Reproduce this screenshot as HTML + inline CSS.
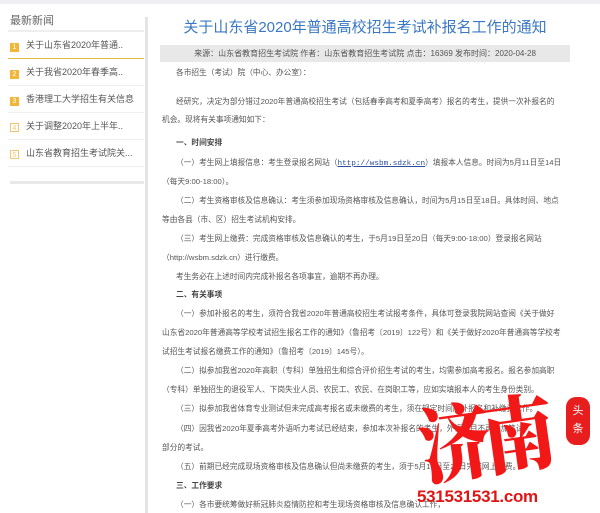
<!DOCTYPE html><html><head><meta charset="utf-8"><style>
*{margin:0;padding:0;box-sizing:border-box}
body{width:600px;height:513px;overflow:hidden;background:#fff;font-family:"Liberation Sans","Noto Sans CJK SC",sans-serif;position:relative;color:#555}
.top{position:absolute;left:0;top:0;width:600px;height:4px;background:#eef0f3}
.side{position:absolute;left:8px;top:10px;width:136px}
.side h3{font-size:11px;font-weight:normal;color:#666;height:22px;line-height:22px;padding-left:2px;border-bottom:2px solid #eee}
.side .it{height:27px;line-height:27px;font-size:9px;color:#555;border-bottom:1px solid #eee;padding-left:2px;white-space:nowrap;overflow:hidden}
.side .it.a{border-bottom:1px solid #e9b84a}
.n{display:inline-block;width:9px;height:9px;font-size:7px;line-height:9px;text-align:center;margin-right:7px;vertical-align:-1px;background:#f0b73a;color:#fff}
.n.o{background:#fff;border:1px solid #f0c870;color:#f0c870}
.sb{position:absolute;left:10px;top:181px;width:134px;height:3px;background:#e8e8e8}
.vbar{position:absolute;left:145px;top:17px;width:3px;height:496px;background:#e4e4e4}
.title{position:absolute;left:160px;top:16px;width:410px;text-align:center;font-size:15px;color:#3b78c4}
.meta{position:absolute;left:160px;top:45px;width:410px;height:17px;background:#e8e8e8;font-size:8px;line-height:17px;text-align:center;color:#555}
.l{position:absolute;font-size:7.7px;color:#555;white-space:nowrap;left:162px}
.i{left:176px}
.b{font-weight:bold;color:#444}
a{color:#2a4fa0;text-decoration:underline;font-family:"Liberation Mono",monospace}
.wm{position:absolute;left:418px;top:398px;line-height:1;font-family:"Noto Serif CJK SC",serif;font-weight:900;font-size:72px;color:#f21818;transform:rotate(-8deg) scaleY(1.15);letter-spacing:-8px}
.url{position:absolute;left:417px;top:487px;font-family:"Liberation Sans",sans-serif;font-weight:bold;font-size:17px;color:#e01515;letter-spacing:-.3px}
.tt{position:absolute;left:566px;top:397px;width:24px;height:48px;background:#e81e1e;border-radius:10px;color:#fff;font-size:11px;text-align:center;line-height:18px;padding-top:5px}
</style></head><body>
<div class="top"></div>
<div class="side"><h3>最新新闻</h3>
<div class="it a"><span class="n">1</span>关于山东省2020年普通..</div>
<div class="it"><span class="n">2</span>关于我省2020年春季高..</div>
<div class="it"><span class="n">3</span>香港理工大学招生有关信息</div>
<div class="it"><span class="n o">4</span>关于调整2020年上半年..</div>
<div class="it"><span class="n o">5</span>山东省教育招生考试院关...</div>
</div>
<div class="sb"></div>
<div class="vbar"></div>
<div class="title">关于山东省2020年普通高校招生考试补报名工作的通知</div>
<div class="meta">来源：山东省教育招生考试院 作者：山东省教育招生考试院 点击：16369 发布时间：2020-04-28</div>
<div class="l i" style="top:67px">各市招生（考试）院（中心、办公室）：</div>
<div class="l i" style="top:96px">经研究，决定为部分错过2020年普通高校招生考试（包括春季高考和夏季高考）报名的考生，提供一次补报名的</div>
<div class="l" style="top:114px">机会。现将有关事项通知如下：</div>
<div class="l i b" style="top:137px">一、时间安排</div>
<div class="l i" style="top:157px">（一）考生网上填报信息：考生登录报名网站（<a>http://wsbm.sdzk.cn</a>）填报本人信息。时间为5月11日至14日</div>
<div class="l" style="top:176px">（每天9:00-18:00）。</div>
<div class="l i" style="top:195px">（二）考生资格审核及信息确认：考生须参加现场资格审核及信息确认，时间为5月15日至18日。具体时间、地点</div>
<div class="l" style="top:214px">等由各县（市、区）招生考试机构安排。</div>
<div class="l i" style="top:233px">（三）考生网上缴费：完成资格审核及信息确认的考生，于5月19日至20日（每天9:00-18:00）登录报名网站</div>
<div class="l" style="top:252px">（http://wsbm.sdzk.cn）进行缴费。</div>
<div class="l i" style="top:271px">考生务必在上述时间内完成补报名各项事宜，逾期不再办理。</div>
<div class="l i b" style="top:289px">二、有关事项</div>
<div class="l i" style="top:308px">（一）参加补报名的考生，须符合我省2020年普通高校招生考试报考条件，具体可登录我院网站查阅《关于做好</div>
<div class="l" style="top:327px">山东省2020年普通高等学校考试招生报名工作的通知》（鲁招考〔2019〕122号）和《关于做好2020年普通高等学校考</div>
<div class="l" style="top:346px">试招生考试报名缴费工作的通知》（鲁招考〔2019〕145号）。</div>
<div class="l i" style="top:365px">（二）拟参加我省2020年高职（专科）单独招生和综合评价招生考试的考生，均需参加高考报名。报名参加高职</div>
<div class="l" style="top:384px">（专科）单独招生的退役军人、下岗失业人员、农民工、农民、在岗职工等，应如实填报本人的考生身份类别。</div>
<div class="l i" style="top:403px">（三）拟参加我省体育专业测试但未完成高考报名或未缴费的考生，须在规定时间内补报名和补缴费工作。</div>
<div class="l i" style="top:423px">（四）因我省2020年夏季高考外语听力考试已经结束，参加本次补报名的考生，外语科目不再参加笔试</div>
<div class="l" style="top:442px">部分的考试。</div>
<div class="l i" style="top:461px">（五）前期已经完成现场资格审核及信息确认但尚未缴费的考生，须于5月19日至20日完成网上缴费。</div>
<div class="l i b" style="top:480px">三、工作要求</div>
<div class="l i" style="top:499px">（一）各市要统筹做好新冠肺炎疫情防控和考生现场资格审核及信息确认工作，</div>
<div class="wm">济南</div>
<div class="tt">头<br>条</div>
<div class="url">531531531.com</div>
</body></html>
